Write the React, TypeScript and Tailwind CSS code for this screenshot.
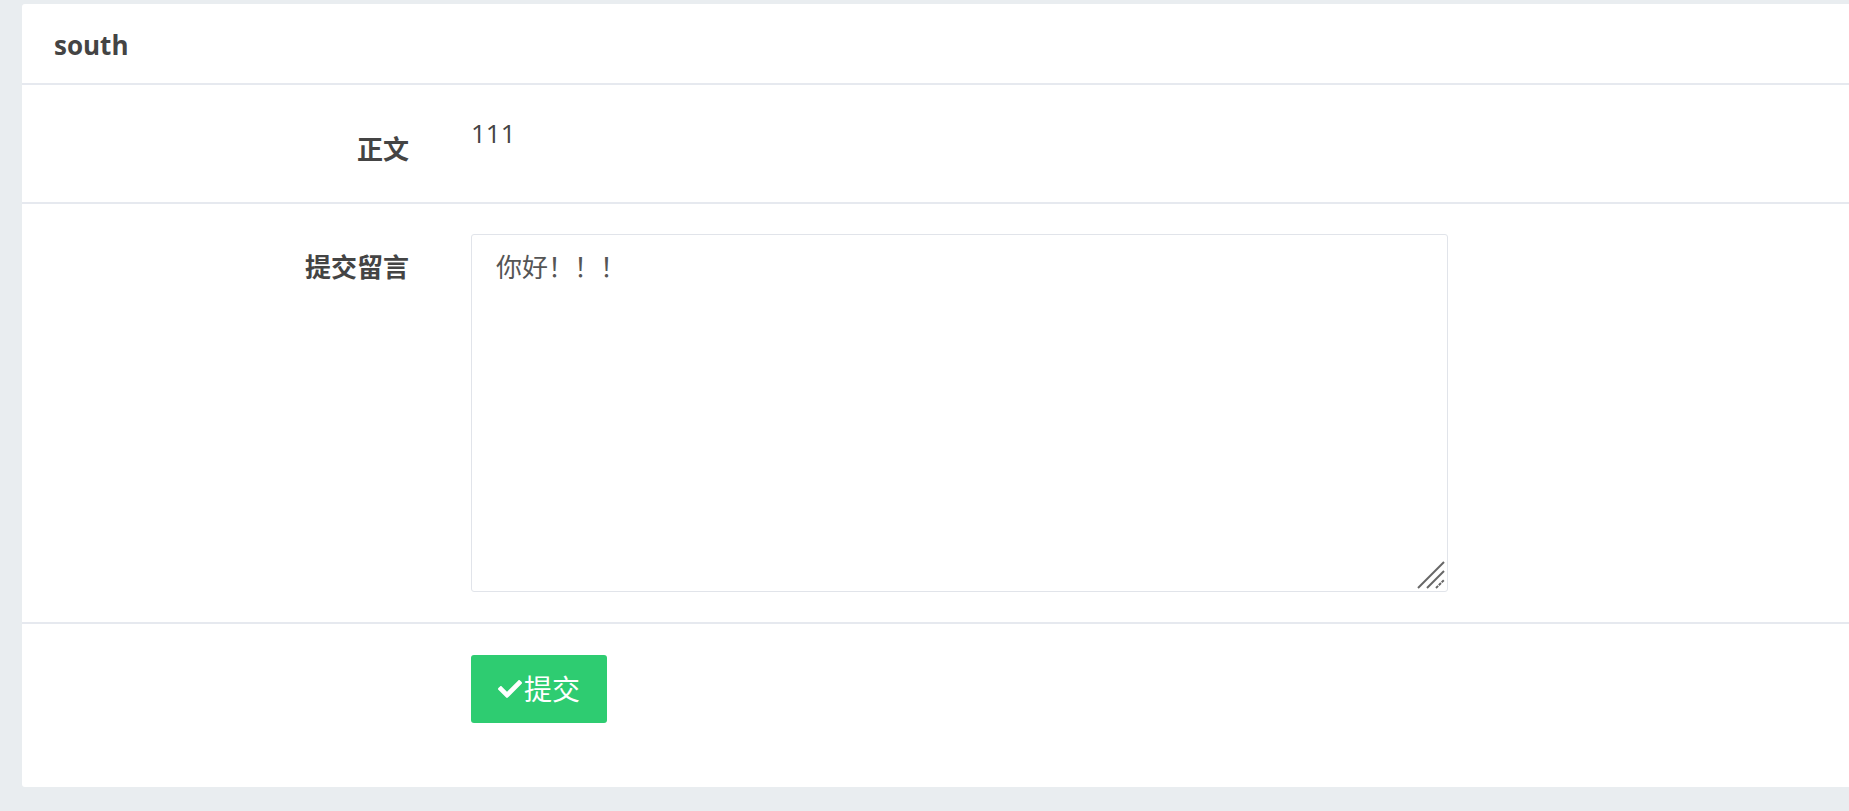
import { FaCheck } from 'react-icons/fa'

function App() {
  const fonte = { fontFamily: '"Open Sans", "Noto Sans CJK SC", sans-serif' }

  return (
    <div className="min-h-screen bg-[#e9edf0] pt-[4px] pl-[22px] pb-[24px]" style={fonte}>
      <div className="bg-white rounded-l-[3px] text-[#444]">
        {/* cabecalho */}
        <div className="h-[81px] flex items-center px-[32px] pt-[4px] border-b-2 border-[#e6e9ef]">
          <h3 className="text-[26px] font-bold text-[#444]">south</h3>
        </div>

        {/* linha: texto */}
        <div className="flex border-b-2 border-[#e6e9ef] pt-[26px] pb-[33px]">
          <label className="w-[387px] shrink-0 text-right text-[26px] font-bold pt-[18px] leading-[40px]">正文</label>
          <div className="ml-[62px] text-[26px] leading-[40px] pt-[2px]">111</div>
        </div>

        {/* linha: mensagem */}
        <div className="flex border-b-2 border-[#e6e9ef] pt-[30px] pb-[30px]">
          <label className="w-[387px] shrink-0 text-right text-[26px] font-bold pt-[14px]">提交留言</label>
          <div className="relative ml-[62px]">
            <textarea
              className="block w-[977px] h-[358px] border border-[#e1e4ea] rounded-[3px] pl-[24px] pr-[22px] pt-[13px] pb-[10px] text-[26px] text-[#555] outline-none resize-none"
              defaultValue="你好！！！"
            />
            <svg className="absolute right-[3px] bottom-[3px]" width="28" height="28" viewBox="0 0 28 28">
              <line x1="1" y1="27" x2="27" y2="1" stroke="#666" strokeWidth="2" />
              <line x1="10" y1="27" x2="27" y2="10" stroke="#666" strokeWidth="2" />
              <line x1="19" y1="27" x2="27" y2="19" stroke="#666" strokeWidth="2" strokeDasharray="3 1" />
            </svg>
          </div>
        </div>

        {/* botao */}
        <div className="flex pt-[31px] pb-[64px]">
          <div className="w-[387px] shrink-0"></div>
          <button className="ml-[62px] w-[136px] h-[68px] rounded-[3px] bg-[#2ecc71] text-white text-[28px] flex items-center justify-center gap-[2px]">
            <FaCheck className="text-[24px]" />
            <span>提交</span>
          </button>
        </div>
      </div>
    </div>
  )
}

export default App
